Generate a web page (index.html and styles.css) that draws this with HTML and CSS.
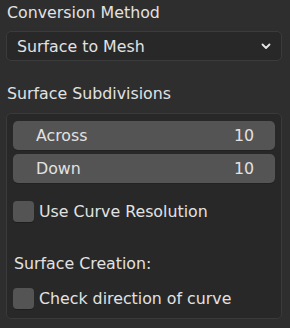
FILE: index.html
```html
<!DOCTYPE html>
<html>
<head>
<meta charset="utf-8">
<link rel="stylesheet" href="styles.css">
</head>
<body>
<div class="page">
  <div class="label top">Conversion Method</div>
  <div class="select">
    <span>Surface to Mesh</span>
    <svg class="chev" width="10" height="7" viewBox="0 0 10 7"><path d="M1.5 1.5 L5 5 L8.5 1.5" fill="none" stroke="#e6e6e6" stroke-width="1.8" stroke-linecap="round" stroke-linejoin="round"/></svg>
  </div>
  <div class="label sub">Surface Subdivisions</div>
  <div class="panel">
    <div class="fields">
      <div class="field"><span>Across</span><span>10</span></div>
      <div class="field"><span>Down</span><span>10</span></div>
    </div>
    <div class="check first"><span class="box"></span><span>Use Curve Resolution</span></div>
    <div class="label creation">Surface Creation:</div>
    <div class="check"><span class="box"></span><span>Check direction of curve</span></div>
  </div>
</div>
</body>
</html>
```
FILE: styles.css
```css
html, body {
  margin: 0;
  padding: 0;
  background: #2e2e2e;
}
body {
  width: 290px;
  height: 328px;
  overflow: hidden;
  font-family: "DejaVu Sans", sans-serif;
  font-size: 15.8px;
  color: #e2e2e2;
}
.page {
  padding: 0 8px 0 6px;
}
.label {
  line-height: 18px;
}
.top {
  padding: 4px 0 0 1px;
}
.select {
  margin-top: 9px;
  height: 28px;
  border: 1px solid #3b3b3b;
  border-radius: 5px;
  background: #282828;
  display: flex;
  align-items: center;
  justify-content: space-between;
  padding: 0 10px 0 10px;
}
.sub {
  padding: 24px 0 0 1px;
}
.panel {
  margin-top: 10px;
  border: 1px solid #3a3a3a;
  border-radius: 5px;
  background: #282828;
  padding: 7px 6px 0 6px;
  box-sizing: border-box;
  height: 206px;
}
.fields {
  display: flex;
  flex-direction: column;
  gap: 4px;
}
.field {
  height: 29px;
  background: #545454;
  border-radius: 5px;
  display: flex;
  align-items: center;
  justify-content: space-between;
  padding: 0 21px 0 23px;
  box-shadow: 0 1px 0 #222;
}
.check {
  display: flex;
  align-items: center;
  gap: 5px;
  height: 22px;
}
.check.first {
  margin-top: 17px;
}
.box {
  width: 21px;
  height: 21px;
  border-radius: 4px;
  background: #545454;
  box-shadow: 0 1px 0 #1e1e1e;
}
.creation {
  padding: 33px 0 0 1px;
  margin-bottom: 14px;
}
```
